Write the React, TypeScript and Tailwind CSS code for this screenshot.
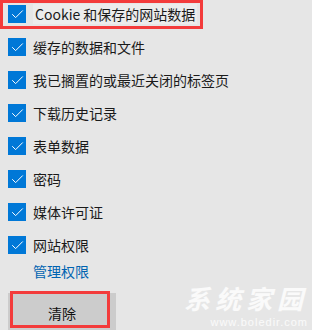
import { Check } from 'lucide-react';

const items = [
  'Cookie 和保存的网站数据',
  '缓存的数据和文件',
  '我已搁置的或最近关闭的标签页',
  '下载历史记录',
  '表单数据',
  '密码',
  '媒体许可证',
  '网站权限',
];

const font = { fontFamily: '"Noto Sans CJK SC", "Noto Sans", sans-serif' };

export default function App() {
  return (
    <div className="relative h-[330px] w-[312px] overflow-hidden bg-[#e6e6e6] text-[#1a1a1a]" style={font}>
      <div className="flex flex-col gap-[5px] pl-2">
        {items.map((label, i) => (
          <div key={label} className="flex h-[28px] items-center gap-[7px]">
            <span className="grid h-[18px] w-[18px] place-items-center bg-[#0078d7]">
              <Check size={15} strokeWidth={1.6} className="text-white" />
            </span>
            <span className={`text-[14px] leading-[20px] ${i === 0 ? 'bg-[#ececec] px-[2px]' : ''}`}>{label}</span>
          </div>
        ))}
      </div>
      <a className="ml-[33px] block h-[24px] text-[14px] leading-[24px] text-[#0063b1]">管理权限</a>
      <div className="ml-2 mt-[10px] flex h-[40px] w-[108px] items-center justify-center bg-[#cccccc] text-[14px] text-[#111]">
        清除
      </div>

      <div className="pointer-events-none absolute left-0 top-0 h-[29px] w-[203px] border-[3px] border-[#f33b3b]" />
      <div className="pointer-events-none absolute left-[10px] top-[291px] h-[37px] w-[100px] border-[3px] border-[#f33b3b]" />

      <div className="pointer-events-none absolute right-[4px] top-[284px] flex flex-col items-end gap-[4px] text-white/80">
        <span className="text-[26px] font-bold italic leading-[28px] tracking-[5px]">系统家园</span>
        <span className="text-[11px] leading-[12px] tracking-[1px]" style={{ fontFamily: '"Liberation Sans", sans-serif' }}>
          www.boledir.com
        </span>
      </div>
    </div>
  );
}
